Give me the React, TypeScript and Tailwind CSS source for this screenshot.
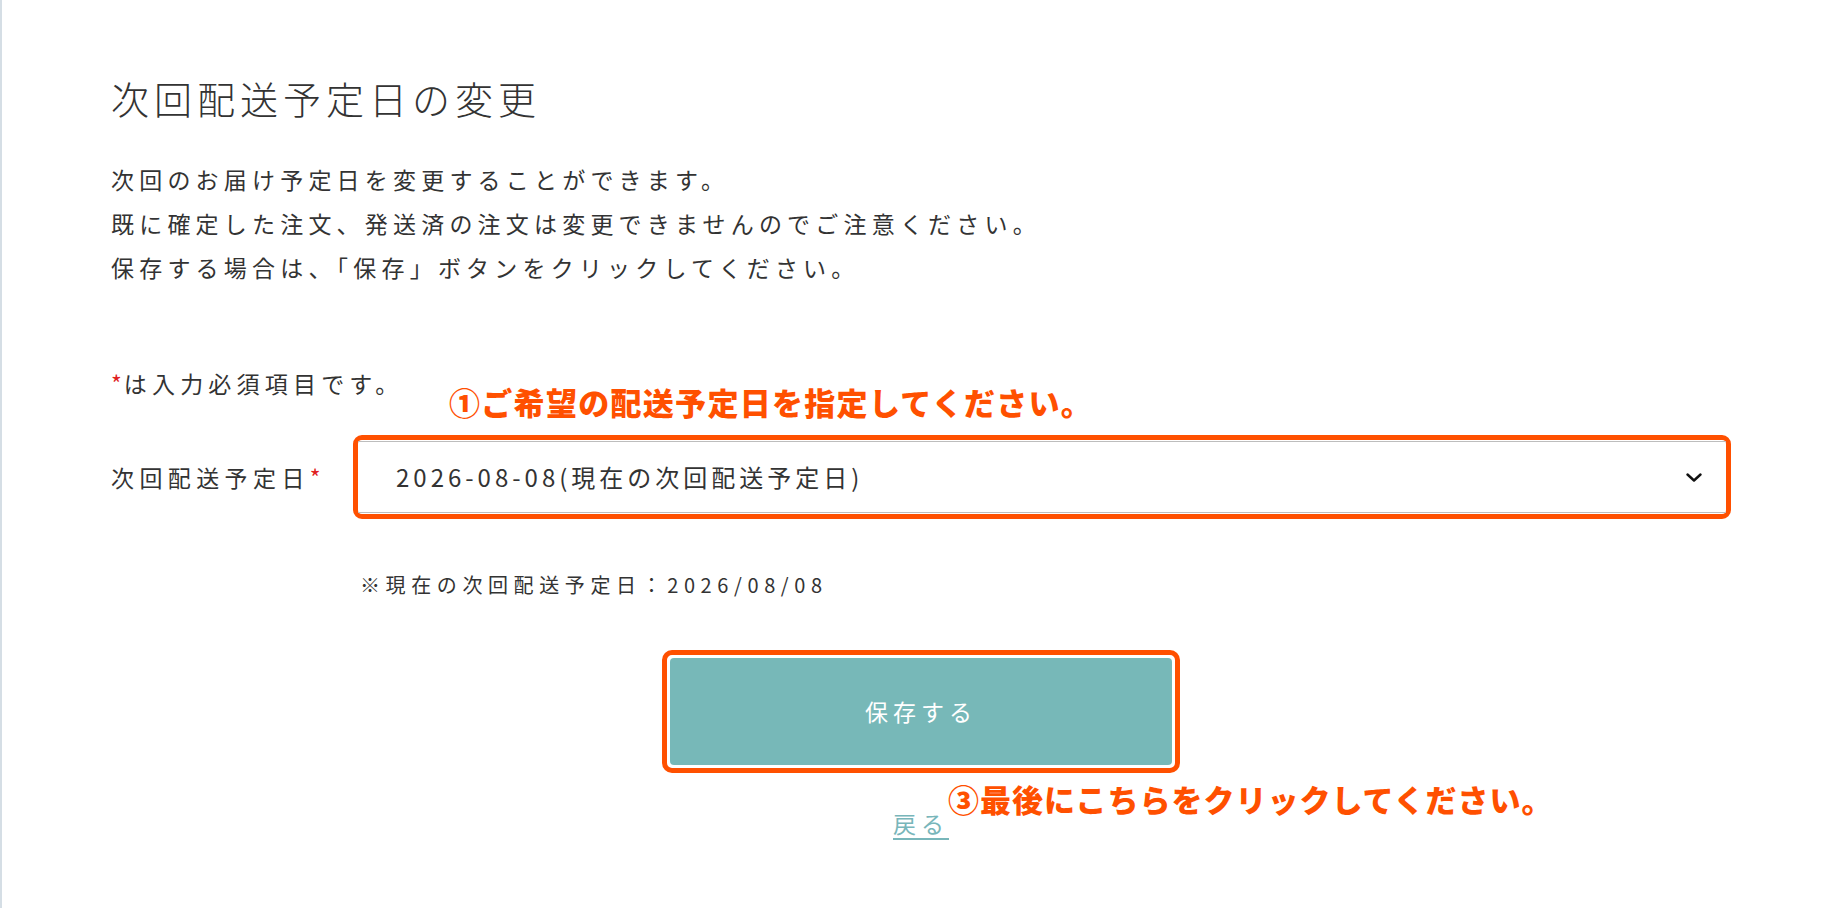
import React from 'react';

const ORANGE = '#ff5000';

function ChevronDown() {
  return (
    <svg width="16" height="9" viewBox="0 0 16 9" fill="none" aria-hidden="true">
      <path d="M1.5 1.5L8 7.5L14.5 1.5" stroke="#111111" strokeWidth="2.4" strokeLinecap="round" strokeLinejoin="round" />
    </svg>
  );
}

export default function App() {
  return (
    <div className="min-h-screen bg-white border-l-[2px] border-[#d5dee5] text-[#333333] font-['Noto_Sans_CJK_JP','Noto_Sans',sans-serif]">
      <div className="pl-[109px] pr-[107px] pt-[74px] pb-[60px]">
        <h1 className="text-[38px] leading-[48px] font-light tracking-[5px]">次回配送予定日の変更</h1>

        <div className="mt-[35px] text-[23px] leading-[44px] tracking-[5.2px]">
          <p>次回のお届け予定日を変更することができます。</p>
          <p>既に確定した注文、発送済の注文は変更できませんのでご注意ください。</p>
          <p>保存する場合は、「保存」ボタンをクリックしてください。</p>
        </div>

        <p className="mt-[72px] text-[23px] leading-[44px] tracking-[5.2px]">
          <span className="text-[#e02020] tracking-[2px]">*</span>は入力必須項目です。
        </p>

        {/* date select row */}
        <div className="mt-[30px] flex items-center">
          <label className="w-[242px] shrink-0 text-[23px] tracking-[5.4px]">
            次回配送予定日<span className="text-[#e02020]">*</span>
          </label>
          <div className="relative flex-1">
            <span className="absolute left-[96px] top-[-53px] leading-[40px] text-[31px] font-black tracking-[1.3px] text-[#ff5000] whitespace-nowrap">
              ①ご希望の配送予定日を指定してください。
            </span>
            <div className="rounded-[9px] border-[5px] py-px" style={{ borderColor: ORANGE }}>
              <div className="h-[72px] border-y border-[#bdbdbd] flex items-center justify-between pl-[38px] pr-[24px]">
                <span className="text-[24px] tracking-[4px]">2026-08-08(現在の次回配送予定日)</span>
                <ChevronDown />
              </div>
            </div>
          </div>
        </div>

        <p className="mt-[46px] ml-[249px] text-[20px] leading-[40px] tracking-[5.6px]">
          ※現在の次回配送予定日：2026/08/08
        </p>

        {/* save button */}
        <div className="relative mx-auto mt-[45px] w-[518px]">
          <div className="rounded-[10px] border-[5px] p-[3px]" style={{ borderColor: ORANGE }}>
            <button className="w-full h-[107px] rounded-[4px] bg-[#77b8b8] text-white text-[23px] tracking-[5px]">
              保存する
            </button>
          </div>
          <span className="absolute left-[286px] top-full mt-[6px] leading-[40px] text-[31px] font-black tracking-[1px] text-[#ff5000] whitespace-nowrap">
            ③最後にこちらをクリックしてください。
          </span>
        </div>

        <div className="mt-[35px] flex justify-center">
          <a href="#" className="text-[23px] leading-[30px] tracking-[5px] text-[#78b6ba] underline underline-offset-[5px]">
            戻る
          </a>
        </div>
      </div>
    </div>
  );
}
